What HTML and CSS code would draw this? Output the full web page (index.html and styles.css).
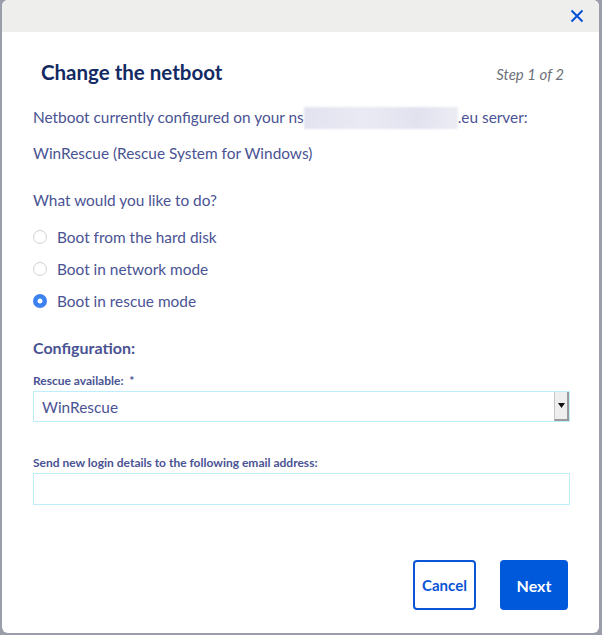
FILE: index.html
```html
<!DOCTYPE html>
<html>
<head>
<meta charset="utf-8">
<link rel="stylesheet" href="styles.css">
</head>
<body>
<div class="modal">
  <div class="modal-header">
    <button class="close" aria-label="Close">
      <svg width="14" height="14" viewBox="0 0 14 14"><path d="M1.5 1.5 L12.5 12.5 M12.5 1.5 L1.5 12.5" stroke="#0050d7" stroke-width="2" fill="none"/></svg>
    </button>
  </div>
  <div class="modal-body">
    <div class="title-row">
      <h2 class="title">Change the netboot</h2>
      <span class="step">Step 1 of 2</span>
    </div>
    <p class="text first">Netboot currently configured on your ns<span class="blur"></span>.eu server:</p>
    <p class="text">WinRescue (Rescue System for Windows)</p>
    <p class="text question">What would you like to do?</p>
    <div class="radios">
      <label class="radio"><span class="dot"></span>Boot from the hard disk</label>
      <label class="radio"><span class="dot"></span>Boot in network mode</label>
      <label class="radio"><span class="dot checked"></span>Boot in rescue mode</label>
    </div>
    <h3 class="section">Configuration:</h3>
    <div class="field-label">Rescue available:&nbsp; *</div>
    <div class="select">
      <span class="select-value">WinRescue</span>
      <span class="select-btn"><svg width="7" height="5" viewBox="0 0 7 5"><path d="M0 0 H7 L3.5 5 Z" fill="#111"/></svg></span>
    </div>
    <div class="field-label second">Send new login details to the following email address:</div>
    <div class="input"></div>
    <div class="actions">
      <button class="btn btn-outline">Cancel</button>
      <button class="btn btn-primary">Next</button>
    </div>
  </div>
</div>
</body>
</html>
```
FILE: styles.css
```css
html, body {
  margin: 0;
  padding: 0;
  background: #9c9daa;
  width: 602px;
  height: 635px;
  overflow: hidden;
}
body {
  font-family: "Lato", "Open Sans", sans-serif;
  color: #4a5393;
}
.modal {
  margin-left: 2px;
  width: 597px;
  height: 633px;
  background: #fff;
  border-radius: 6px;
  overflow: hidden;
  display: flex;
  flex-direction: column;
}
.modal-header {
  height: 32px;
  background: #eeefed;
  display: flex;
  justify-content: flex-end;
  align-items: center;
  padding-right: 15px;
  flex: none;
}
.close {
  border: 0;
  background: none;
  padding: 0;
  width: 14px;
  height: 14px;
  display: flex;
}
.modal-body {
  padding: 0 29px 0 31px;
  display: flex;
  flex-direction: column;
  flex: 1;
}
.title-row {
  display: flex;
  justify-content: space-between;
  align-items: baseline;
  padding: 28px 6px 0 8px;
}
.title {
  margin: 0;
  font-size: 20.5px;
  font-weight: 700;
  color: #132a63;
}
.step {
  font-size: 15px;
  font-style: italic;
  color: #6d6f78;
}
.text {
  margin: 0;
  font-size: 15.4px;
  line-height: 20px;
}
.text.first {
  margin-top: 23px;
}
.text + .text {
  margin-top: 14px;
}
.text.question {
  margin-top: 27px;
}
.blur {
  display: inline-block;
  width: 154px;
  height: 22px;
  vertical-align: -6px;
  background: linear-gradient(90deg, #e2e3ef, #e9eaf3 40%, #e1e2ee 75%, #ecedf4);
  filter: blur(1px);
}
.radios {
  display: flex;
  flex-direction: column;
  gap: 12px;
  margin-top: 17px;
}
.radio {
  display: flex;
  align-items: center;
  font-size: 15.4px;
  line-height: 20px;
  gap: 10px;
}
.dot {
  border: 1.5px solid #d3d3d5;
  border-radius: 50%;
  box-sizing: border-box;
  width: 14px;
  height: 14px;
  background: #fff;
}
.dot.checked {
  border: 0;
  background: radial-gradient(circle, #fff 0 2.2px, #3b82f0 2.8px);
}
.section {
  margin: 27px 0 0;
  font-size: 16px;
  font-weight: 700;
  line-height: 20px;
}
.field-label {
  margin-top: 16px;
  font-size: 12px;
  font-weight: 700;
  line-height: 14px;
}
.field-label.second {
  margin-top: 34px;
}
.select {
  margin-top: 3px;
  height: 31px;
  border: 1px solid #bfeefb;
  box-sizing: border-box;
  display: flex;
  align-items: stretch;
  justify-content: space-between;
  width: 537px;
}
.select-value {
  padding-left: 8px;
  font-size: 15.4px;
  display: flex;
  align-items: center;
}
.select-btn {
  width: 12px;
  background: #eeeeee;
  border-left: 1px solid #c8c8c8;
  border-right: 2px solid #9a9a9a;
  border-bottom: 2px solid #9a9a9a;
  display: flex;
  align-items: center;
  justify-content: center;
}
.input {
  margin-top: 3px;
  height: 32px;
  border: 1px solid #bfeefb;
  box-sizing: border-box;
  width: 537px;
}
.actions {
  margin-top: auto;
  margin-bottom: 23px;
  display: flex;
  justify-content: flex-end;
  gap: 24px;
  padding-right: 2px;
}
.btn {
  height: 50px;
  border-radius: 4px;
  font-family: "Lato", sans-serif;
  font-weight: 700;
  font-size: 15px;
  padding: 0;
}
.btn-outline {
  width: 63px;
  border: 2px solid #0a55d7;
  color: #0a55d7;
  background: #fff;
}
.btn-primary {
  width: 68px;
  border: 0;
  background: #0058da;
  color: #fff;
  font-size: 16px;
}
```
